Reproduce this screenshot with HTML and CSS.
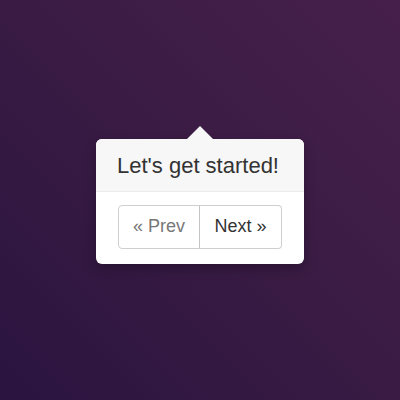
FILE: index.html
```html
<!DOCTYPE html>
<html>
<head>
<meta charset="utf-8">
<link rel="stylesheet" href="styles.css">
</head>
<body>
<div class="stage">
  <div class="popover">
    <div class="arrow"></div>
    <div class="popover-title">Let's get started!</div>
    <div class="popover-content">
      <div class="btn-group">
        <button class="btn btn-prev">« Prev</button>
        <button class="btn btn-next">Next »</button>
      </div>
    </div>
  </div>
</div>
</body>
</html>
```
FILE: styles.css
```css
html, body {
  margin: 0;
  padding: 0;
}
body {
  width: 400px;
  height: 400px;
  background: linear-gradient(to top right, #2a1440 0%, #391b43 50%, #46204b 100%);
  font-family: "Liberation Sans", Arial, sans-serif;
}
.stage {
  width: 400px;
  height: 400px;
  display: flex;
  align-items: center;
  justify-content: center;
}
.popover {
  position: relative;
  width: 208px;
  background: #fff;
  border-radius: 6px;
  box-shadow: 0 5px 12px rgba(0, 0, 0, 0.25);
  margin-top: 2px;
}
.arrow {
  position: absolute;
  top: -13px;
  left: 91px;
  width: 0;
  height: 0;
  border-left: 13px solid transparent;
  border-right: 13px solid transparent;
  border-bottom: 13px solid #f7f7f7;
}
.popover-title {
  height: 53px;
  box-sizing: border-box;
  background: #f7f7f7;
  border-bottom: 1px solid #ebebeb;
  border-radius: 6px 6px 0 0;
  font-size: 22px;
  line-height: 53px;
  color: #333;
  text-align: center;
  padding-right: 4px;
}
.popover-content {
  display: flex;
  justify-content: center;
  padding: 13px 0 15px;
}
.btn-group {
  display: flex;
}
.btn {
  font-family: inherit;
  font-size: 18px;
  height: 44px;
  background: #fff;
  border: 1px solid #cfcfcf;
  margin: 0;
  padding: 0;
}
.btn-prev {
  width: 82px;
  color: #777;
  border-radius: 4px 0 0 4px;
}
.btn-next {
  width: 83px;
  color: #333;
  border-left: 1px solid #c4c4c4;
  margin-left: -1px;
  border-radius: 0 4px 4px 0;
}
```
